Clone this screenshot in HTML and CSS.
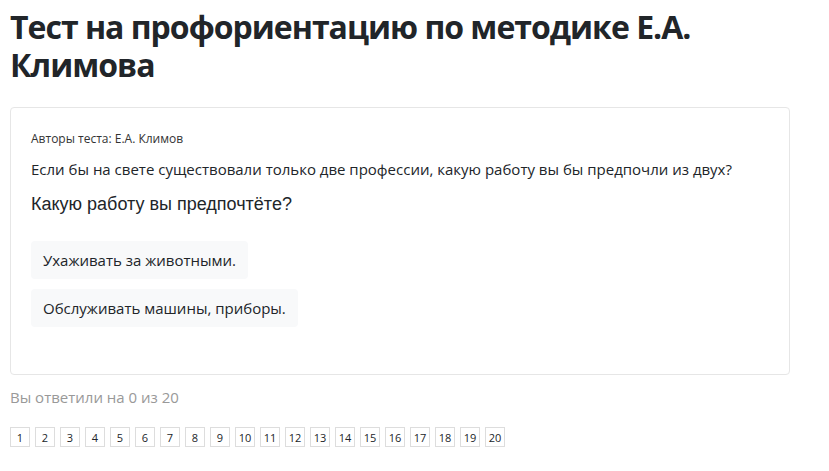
FILE: index.html
```html
<!DOCTYPE html>
<html lang="ru">
<head>
    <meta charset="UTF-8">
    <meta name="viewport" content="width=device-width, initial-scale=1.0">
    <title>Тест на профориентацию по методике Е.А. Климова</title>
    <link rel="stylesheet" href="styles.css">
</head>
<body>
    <div class="container">
        <h1>Тест на профориентацию по методике Е.А. Климова</h1>

        <div class="card">
            <p class="authors">Авторы теста: Е.А. Климов</p>
            <p class="intro">Если бы на свете существовали только две профессии, какую работу вы бы предпочли из двух?</p>
            <h3 class="question">Какую работу вы предпочтёте?</h3>

            <div class="answers">
                <button class="answer">Ухаживать за животными.</button>
                <button class="answer">Обслуживать машины, приборы.</button>
            </div>
        </div>

        <p class="progress">Вы ответили на 0 из 20</p>

        <div class="pages">
            <span>1</span><span>2</span><span>3</span><span>4</span><span>5</span>
            <span>6</span><span>7</span><span>8</span><span>9</span><span>10</span>
            <span>11</span><span>12</span><span>13</span><span>14</span><span>15</span>
            <span>16</span><span>17</span><span>18</span><span>19</span><span>20</span>
        </div>
    </div>
</body>
</html>
```

FILE: styles.css
```css
body {
    font-family: "Open Sans", "Noto Sans", sans-serif;
    color: #212529;
    background-color: #fff;
    margin: 0;
    padding: 0;
}
.container {
    width: 780px;
    padding: 0 10px;
}
h1 {
    font-size: 32px;
    font-weight: 700;
    line-height: 38px;
    margin: 8px 0 23px;
    letter-spacing: -1px;
}
.card {
    border: 1px solid #e6e6e6;
    border-radius: 4px;
    padding: 20px 20px 47px;
}
.authors {
    font-size: 12px;
    margin: 2px 0 12px;
    color: #333;
}
.intro {
    font-size: 15px;
    margin: 0 0 15px;
}
.question {
    font-family: "Liberation Sans", Arial, sans-serif;
    font-size: 18px;
    font-weight: 400;
    margin: 0 0 26px;
}
.answers {
    display: flex;
    flex-direction: column;
    align-items: flex-start;
    gap: 10px;
}
.answer {
    font-family: inherit;
    font-size: 15px;
    color: #212529;
    background-color: #f8f9fa;
    border: none;
    border-radius: 4px;
    padding: 0 12px;
    height: 38px;
    cursor: pointer;
}
.progress {
    color: #999;
    font-size: 15px;
    margin: 12px 0 20px;
}
.pages {
    display: flex;
    gap: 5px;
}
.pages span {
    display: flex;
    justify-content: center;
    align-items: center;
    width: 18px;
    height: 18px;
    border: 1px solid #ddd;
    font-size: 11px;
}
```
